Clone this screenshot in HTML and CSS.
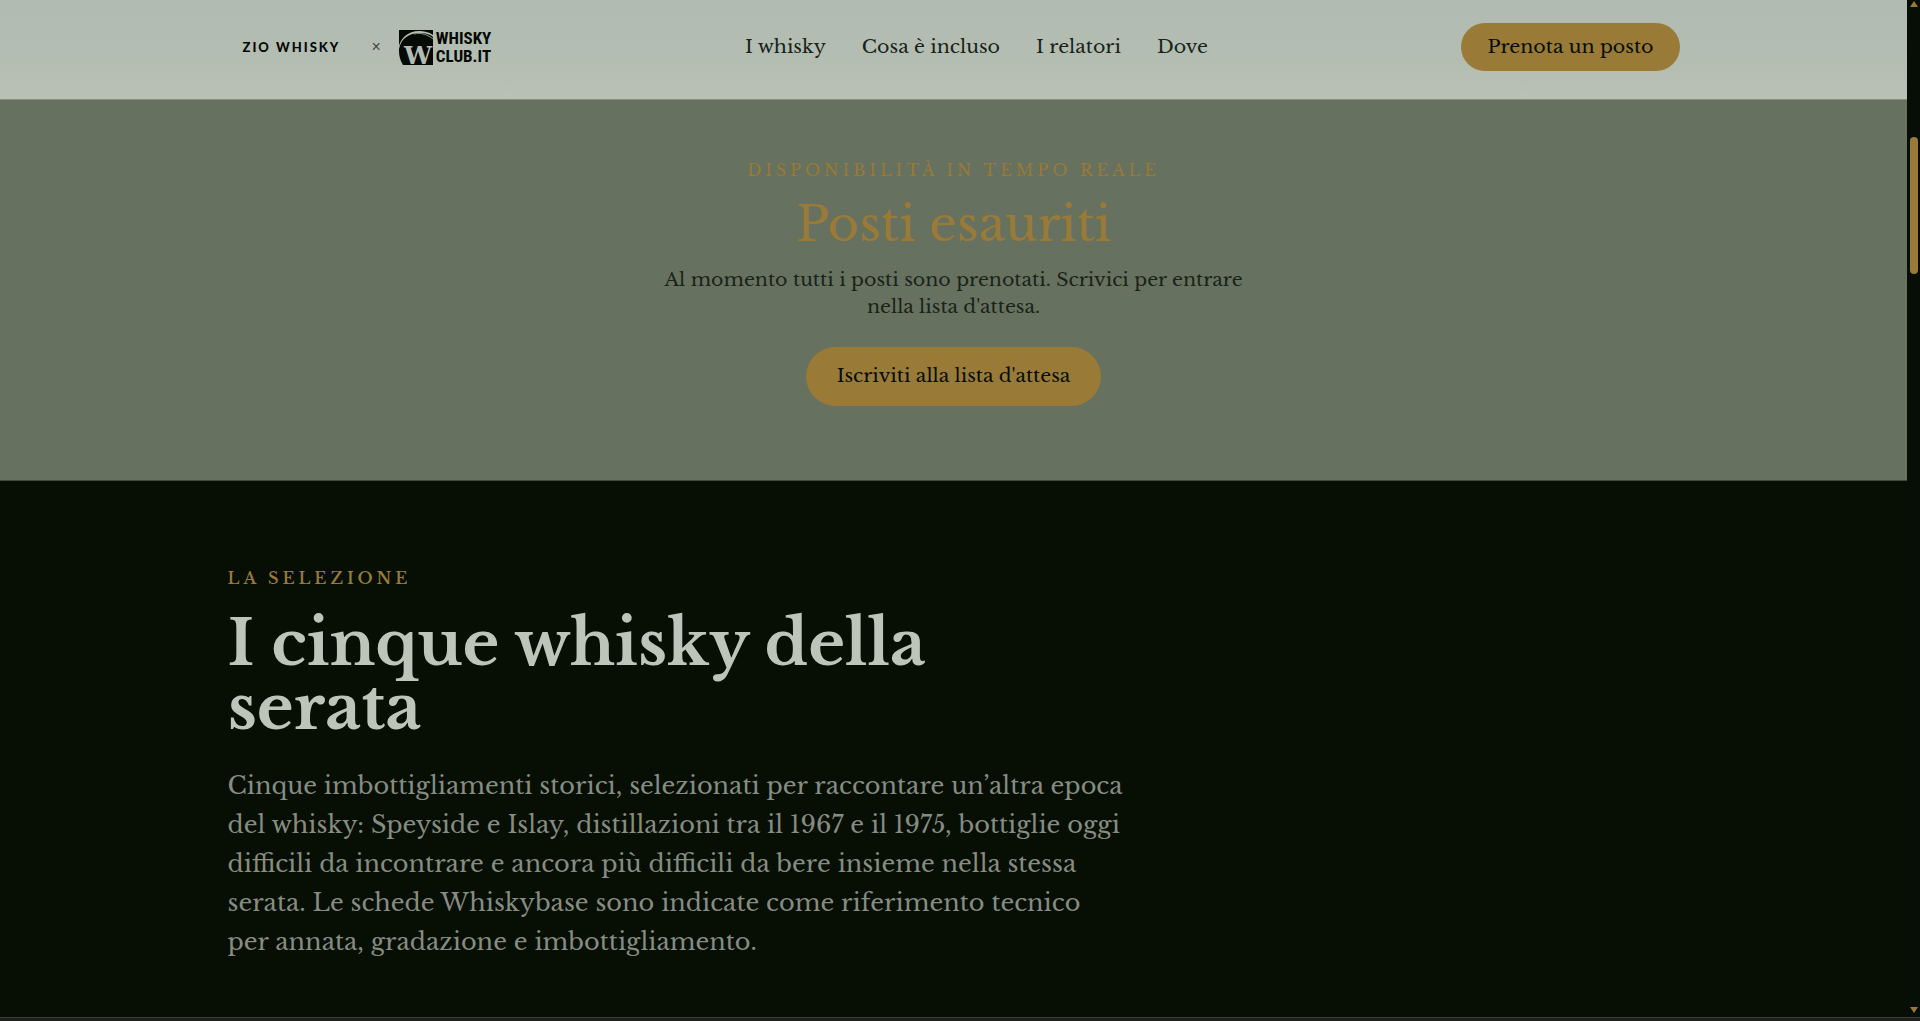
FILE: index.html
```html
<!DOCTYPE html>
<html lang="it">
<head>
  <meta charset="UTF-8">
  <meta name="viewport" content="width=device-width, initial-scale=1.0">
  <title>Zio Whisky x Whiskyclub.it</title>
  <link rel="stylesheet" href="styles.css">
</head>
<body>
  <div class="viewport">
    <div class="page">
      <header class="site-header">
        <div class="container header-inner">
          <a class="brand" href="#">
            <span class="brand-zio">ZIO WHISKY</span>
            <span class="brand-x">×</span>
            <span class="brand-club">
              <svg class="club-mark" viewBox="0 0 34 35" aria-hidden="true">
                <path d="M0 0H34V35H4C1 30 0 26 0 21Z" fill="#050a05"/>
                <path d="M0 19C2 8 11 3 20 3C26 3 31 4 34 7L34 5C30 2 25 1 20 1C9 1 2 8 0 16Z" fill="#b3bcb2"/>
                <path d="M15 4C22 2 29 5 34 9" fill="none" stroke="#8b938a" stroke-width="1"/>
                <text class="club-w" x="5" y="34">W</text>
              </svg>
              <span class="club-name">WHISKY<br>CLUB.IT</span>
            </span>
          </a>
          <nav class="main-nav">
            <a href="#whisky">I whisky</a>
            <a href="#incluso">Cosa è incluso</a>
            <a href="#relatori">I relatori</a>
            <a href="#dove">Dove</a>
          </nav>
          <a class="btn btn-small" href="#prenota">Prenota un posto</a>
        </div>
      </header>

      <section class="availability" id="prenota">
        <p class="eyebrow">Disponibilità in tempo reale</p>
        <h2 class="status">Posti esauriti</h2>
        <p class="status-text">Al momento tutti i posti sono prenotati. Scrivici per entrare nella lista d'attesa.</p>
        <a class="btn" href="#attesa">Iscriviti alla lista d'attesa</a>
      </section>

      <section class="selection" id="whisky">
        <div class="container">
          <p class="eyebrow eyebrow-strong">La selezione</p>
          <h1>I cinque whisky della serata</h1>
          <p class="lead">Cinque imbottigliamenti storici, selezionati per raccontare un’altra epoca del whisky: Speyside e Islay, distillazioni tra il 1967 e il 1975, bottiglie oggi difficili da incontrare e ancora più difficili da bere insieme nella stessa serata. Le schede Whiskybase sono indicate come riferimento tecnico per annata, gradazione e imbottigliamento.</p>
        </div>
      </section>
    </div>

    <div class="scrollbar" aria-hidden="true">
      <span class="arrow arrow-up"></span>
      <span class="track"><span class="thumb"></span></span>
      <span class="arrow arrow-down"></span>
    </div>
  </div>
  <div class="bottom-edge"></div>
</body>
</html>
```
FILE: styles.css
```css
* {
  box-sizing: border-box;
}
body {
  margin: 0;
  min-height: 100vh;
  display: flex;
  flex-direction: column;
  background: #070f05;
  color: #1a2318;
  font-family: "Libre Baskerville", "Liberation Serif", serif;
  font-size: 19px;
}
h1, h2, p {
  margin: 0;
}
a {
  color: inherit;
  text-decoration: none;
}
.viewport {
  flex: 1;
  display: flex;
}
.page {
  flex: 1;
  min-width: 0;
}
.container {
  width: 100%;
  max-width: 1500px;
  margin: 0 auto;
  padding: 0 24px;
}

/* header */
.site-header {
  background: linear-gradient(#b2bbb1, #b4bdb2 60%, #b9c0b6);
  border-bottom: 1px solid #829080;
  padding: 23px 0 28px;
}
.header-inner {
  display: flex;
  align-items: center;
  justify-content: space-between;
}
.brand {
  display: flex;
  align-items: center;
  padding-left: 15px;
  color: #050a05;
}
.brand-zio {
  font: 900 13px/20px Lato, sans-serif;
  letter-spacing: 2px;
}
.brand-x {
  margin: 0 18px 0 31px;
  font: 16px/20px "Liberation Sans", sans-serif;
  color: #444c42;
}
.brand-club {
  display: flex;
  align-items: center;
  gap: 3px;
}
.club-mark {
  width: 34px;
  height: 35px;
  overflow: visible;
}
.club-w {
  font: bold 25px "DejaVu Serif", serif;
  fill: #b3bcb2;
}
.club-name {
  font: bold 17px/18px "Roboto Condensed", "Open Sans Condensed", Roboto, sans-serif;
}
.main-nav {
  display: flex;
  gap: 36px;
  line-height: 28px;
}
.btn {
  display: inline-block;
  padding: 15px 31px 16px;
  border-radius: 30px;
  background: #997a36;
  color: #060e05;
  line-height: 28px;
}
.btn-small {
  padding: 10px 26px;
}

/* availability */
.availability {
  background: #667160;
  padding: 59px 24px 74px;
  text-align: center;
  border-bottom: 1px solid #414a3d;
}
.eyebrow {
  color: #997a36;
  font-size: 16px;
  line-height: 22px;
  letter-spacing: 4px;
  text-transform: uppercase;
}
.eyebrow-strong {
  font-weight: 600;
}
.status {
  margin-top: 13px;
  color: #997a36;
  font-size: 48px;
  font-weight: 400;
  line-height: 60px;
}
.status-text {
  max-width: 600px;
  margin: 12px auto 27px;
  line-height: 27px;
}

/* selection */
.selection {
  padding: 86px 0 48px;
}
.selection h1 {
  max-width: 800px;
  margin: 22px 0 27px;
  color: #bdc5bb;
  font-size: 63px;
  line-height: 64px;
}
.lead {
  max-width: 898px;
  color: #868c81;
  font-size: 24px;
  line-height: 39px;
}

/* scrollbar column */
.scrollbar {
  width: 13px;
  display: flex;
  flex-direction: column;
  align-items: center;
  background: #060e05;
}
.track {
  flex: 1;
  width: 8px;
  padding-top: 130px;
}
.thumb {
  display: block;
  height: 137px;
  border-radius: 4px;
  background: #997a36;
}
.arrow {
  border: 4px solid transparent;
}
.arrow-up {
  border-top: 0;
  border-bottom: 6px solid #997a36;
  margin-top: 1px;
}
.arrow-down {
  border-bottom: 0;
  border-top: 6px solid #997a36;
  margin-bottom: 4px;
}
.bottom-edge {
  height: 4px;
  background: #1e201d;
  border-top: 1px solid #3c3d3a;
}
```
